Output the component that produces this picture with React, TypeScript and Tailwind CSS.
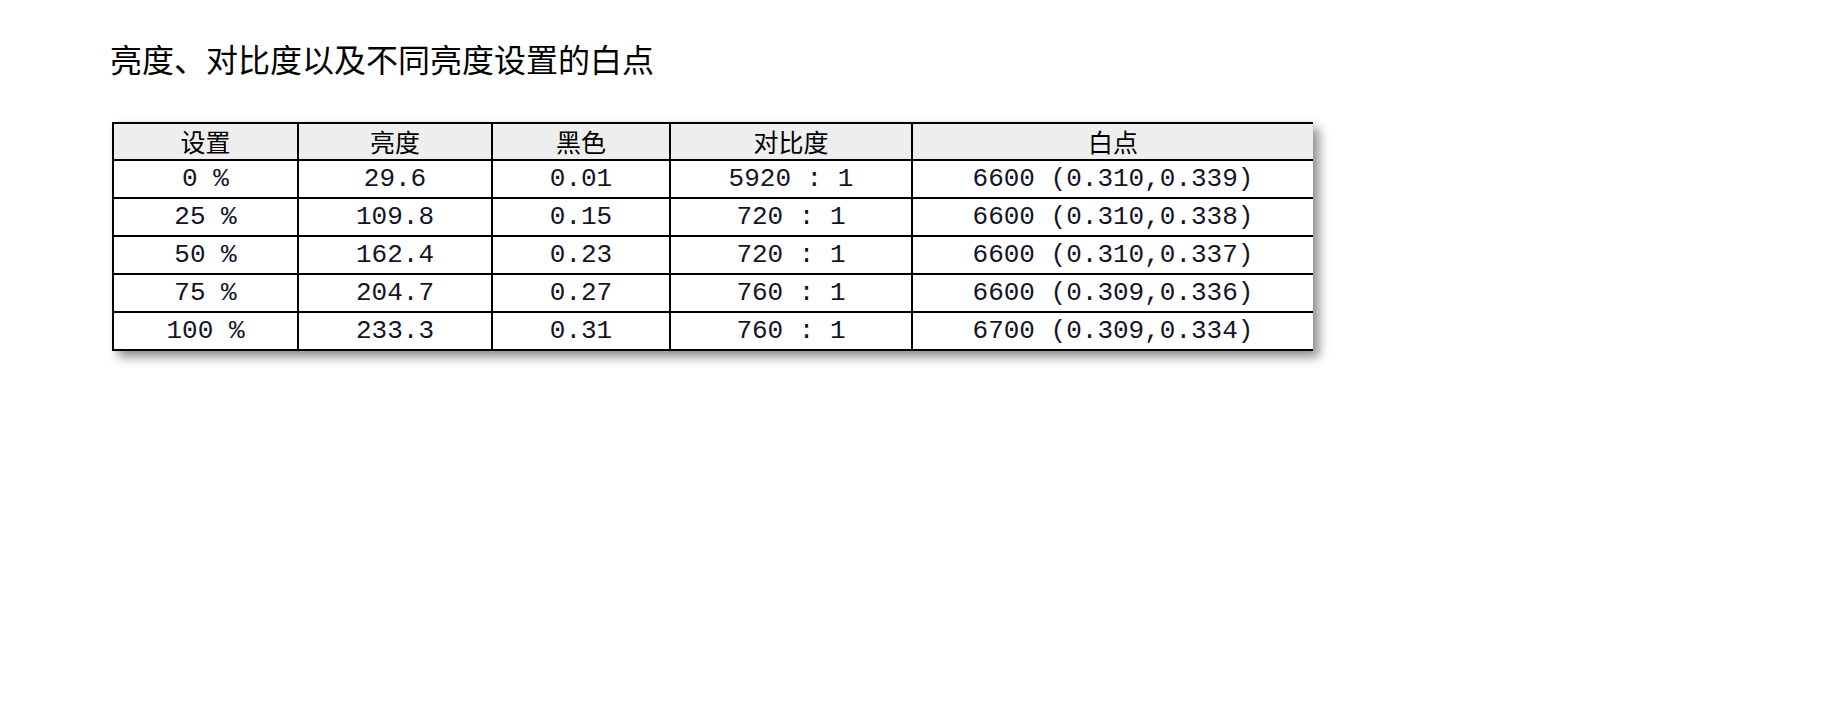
const headers = ['设置', '亮度', '黑色', '对比度', '白点']

const rows = [
  ['0 %', '29.6', '0.01', '5920 : 1', '6600 (0.310,0.339)'],
  ['25 %', '109.8', '0.15', '720 : 1', '6600 (0.310,0.338)'],
  ['50 %', '162.4', '0.23', '720 : 1', '6600 (0.310,0.337)'],
  ['75 %', '204.7', '0.27', '760 : 1', '6600 (0.309,0.336)'],
  ['100 %', '233.3', '0.31', '760 : 1', '6700 (0.309,0.334)'],
]

const widths = ['w-[185px]', 'w-[194px]', 'w-[178px]', 'w-[242px]', 'w-[401px]']

export default function App() {
  return (
    <div className="min-h-screen bg-white pl-[110px] pt-[38px]">
      <h1 className="text-[32px] leading-[40px] text-black font-['Noto_Sans_CJK_SC',sans-serif]">
        亮度、对比度以及不同亮度设置的白点
      </h1>

      <table className="ml-[2px] mt-[44px] border-collapse shadow-[6px_6px_10px_rgba(0,0,0,0.45)] bg-white">
        <thead>
          <tr className="bg-[#eeeeee]">
            {headers.map((h, i) => (
              <th
                key={h}
                className={`${widths[i]} h-[37px] p-0 border-2 border-black ${i === 4 ? 'border-r-0' : ''} text-[25px] font-normal leading-none text-black font-['Noto_Sans_CJK_SC',sans-serif]`}
              >
                {h}
              </th>
            ))}
          </tr>
        </thead>
        <tbody>
          {rows.map((r) => (
            <tr key={r[0]}>
              {r.map((c, i) => (
                <td
                  key={i}
                  className={`h-[38px] p-0 border-2 border-black ${i === 4 ? 'border-r-0' : ''} text-center text-[26px] leading-none text-[#141428] whitespace-pre font-['Liberation_Mono',monospace]`}
                >
                  {c}
                </td>
              ))}
            </tr>
          ))}
        </tbody>
      </table>
    </div>
  )
}
